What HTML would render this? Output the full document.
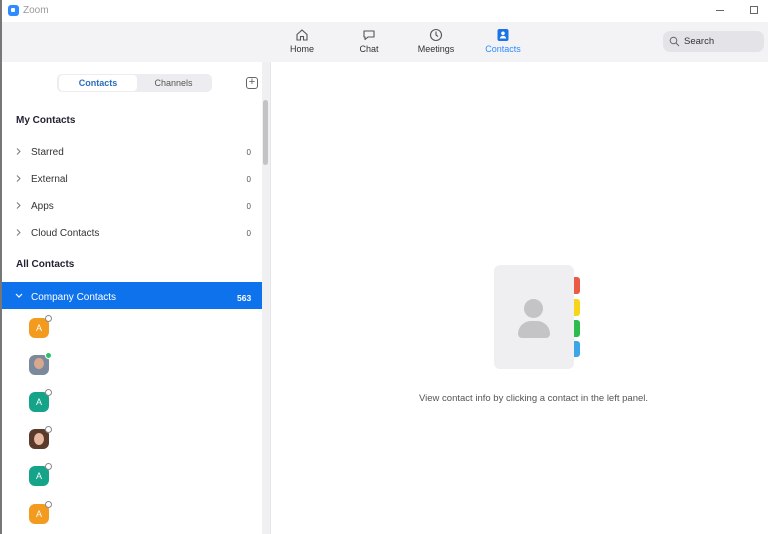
<!DOCTYPE html>
<html><head><style>
*{margin:0;padding:0;box-sizing:border-box}
body{width:768px;height:534px;overflow:hidden;background:#fff;font-family:"Liberation Sans",sans-serif;position:relative;color:#232333}
.a{position:absolute}
.row{position:absolute;left:0;width:262px;height:27px;font-size:10px;color:#333}
.row svg{position:absolute;left:16px;top:9px}
.row .l{position:absolute;left:31px;top:8px}
.row .n{position:absolute;right:11px;top:9px;font-size:8px;color:#555}
.av{position:absolute;left:29px;width:20px;height:20px;border-radius:6px;color:#fff;font-size:9px;text-align:center;line-height:20px}
.dot{position:absolute;left:45px;width:7px;height:7px;border-radius:50%;background:#fff;border:1.5px solid #888}
.nav{position:absolute;top:28px;text-align:center;font-size:9px;color:#333;width:50px}
.nav svg{display:block;margin:0 auto 2px}
</style></head><body>
<div class="a" style="left:0;top:0;width:2px;height:534px;background:#777"></div>
<div class="a" style="left:8px;top:5px;width:11px;height:11px;border-radius:3px;background:#2d8cff"></div>
<div class="a" style="left:11px;top:8px;width:4px;height:4px;background:#fff;border-radius:1px"></div>
<div class="a" style="left:23px;top:5px;color:#999;font-size:10px">Zoom</div>
<div class="a" style="left:716px;top:10px;width:8px;height:1px;background:#666"></div>
<div class="a" style="left:750px;top:6px;width:8px;height:8px;border:1px solid #666"></div>
<div class="a" style="left:2px;top:22px;width:766px;height:40px;background:#f3f3f6"></div>
<div class="nav" style="left:277px"><svg width="14" height="14" viewBox="0 0 14 14"><path d="M2 6.5L7 2l5 4.5V12H8.5V8.5h-3V12H2z" fill="none" stroke="#555" stroke-width="1.1"/></svg>Home</div>
<div class="nav" style="left:344px"><svg width="14" height="14" viewBox="0 0 14 14"><path d="M2 3h10v6H6l-3 2.5V9H2z" fill="none" stroke="#555" stroke-width="1.1" stroke-linejoin="round"/></svg>Chat</div>
<div class="nav" style="left:411px"><svg width="14" height="14" viewBox="0 0 14 14"><circle cx="7" cy="7" r="5.5" fill="none" stroke="#555" stroke-width="1.1"/><path d="M7 3.5V7l2 1.5" fill="none" stroke="#555" stroke-width="1.1"/></svg>Meetings</div>
<div class="nav" style="left:478px;color:#2d8cff"><svg width="14" height="14" viewBox="0 0 14 14"><rect x="1.5" y="1" width="11" height="12" rx="2" fill="#1a73e8"/><circle cx="7" cy="5.3" r="1.8" fill="#fff"/><path d="M3.8 10.5c.5-2 1.7-2.6 3.2-2.6s2.7.6 3.2 2.6z" fill="#fff"/></svg>Contacts</div>
<div class="a" style="left:663px;top:31px;width:101px;height:21px;border-radius:7px;background:#e4e4e8"></div>
<svg class="a" style="left:669px;top:36px" width="11" height="11" viewBox="0 0 11 11"><circle cx="4.5" cy="4.5" r="3.3" fill="none" stroke="#666" stroke-width="1"/><path d="M7 7l3 3" stroke="#666" stroke-width="1"/></svg>
<div class="a" style="left:684px;top:36px;font-size:9.5px;color:#333">Search</div>
<div class="a" style="left:262px;top:62px;width:8px;height:472px;background:#f0f0f3"></div>
<div class="a" style="left:263px;top:100px;width:5px;height:65px;border-radius:3px;background:#c3c3c6"></div>
<div class="a" style="left:270px;top:62px;width:1px;height:472px;background:#e6e6ea"></div>
<div class="a" style="left:57px;top:74px;width:155px;height:18px;border-radius:5px;background:#ededf1"></div>
<div class="a" style="left:59px;top:75px;width:78px;height:16px;border-radius:4px;background:#fff;font-size:9px;font-weight:bold;color:#2a6ebb;text-align:center;line-height:16px">Contacts</div>
<div class="a" style="left:137px;top:75px;width:73px;height:16px;font-size:9px;color:#555;text-align:center;line-height:16px">Channels</div>
<div class="a" style="left:246px;top:77px;width:12px;height:12px;border:1px solid #666;border-radius:3px;font-size:11px;line-height:9px;text-align:center;color:#555">+</div>
<div class="a" style="left:16px;top:115px;font-size:10px;font-weight:bold">My Contacts</div>
<div class="row" style="top:139px"><svg width="5" height="7" viewBox="0 0 5 7"><path d="M1 .5l3 3-3 3" fill="none" stroke="#777" stroke-width="1"/></svg><span class="l">Starred</span><span class="n">0</span></div>
<div class="row" style="top:166px"><svg width="5" height="7" viewBox="0 0 5 7"><path d="M1 .5l3 3-3 3" fill="none" stroke="#777" stroke-width="1"/></svg><span class="l">External</span><span class="n">0</span></div>
<div class="row" style="top:193px"><svg width="5" height="7" viewBox="0 0 5 7"><path d="M1 .5l3 3-3 3" fill="none" stroke="#777" stroke-width="1"/></svg><span class="l">Apps</span><span class="n">0</span></div>
<div class="row" style="top:220px"><svg width="5" height="7" viewBox="0 0 5 7"><path d="M1 .5l3 3-3 3" fill="none" stroke="#777" stroke-width="1"/></svg><span class="l">Cloud Contacts</span><span class="n">0</span></div>
<div class="a" style="left:16px;top:259px;font-size:10px;font-weight:bold">All Contacts</div>
<div class="a" style="left:2px;top:282px;width:260px;height:27px;background:#0e72ed"></div>
<svg class="a" style="left:15px;top:293px" width="8" height="6" viewBox="0 0 8 6"><path d="M1 1l3 3 3-3" fill="none" stroke="#fff" stroke-width="1.2"/></svg>
<div class="a" style="left:31px;top:292px;font-size:10px;color:#fff">Company Contacts</div>
<div class="a" style="left:237px;top:293px;font-size:8.5px;color:#fff;font-weight:bold">563</div>
<div class="av" style="top:318px;background:#f29b1e">A</div><div class="dot" style="top:315px"></div>
<div class="av" style="top:355px;background:#7a8a9c"><div style="margin:3px auto 0;width:10px;height:11px;border-radius:50%;background:#d8a88c"></div></div><div class="dot" style="top:352px;background:#2cc069;border-color:#fff"></div>
<div class="av" style="top:392px;background:#15a38a">A</div><div class="dot" style="top:389px"></div>
<div class="av" style="top:429px;background:#5a3a2a"><div style="margin:4px auto 0;width:10px;height:12px;border-radius:50%;background:#e6b9a0"></div></div><div class="dot" style="top:426px"></div>
<div class="av" style="top:466px;background:#15a38a">A</div><div class="dot" style="top:463px"></div>
<div class="av" style="top:504px;background:#f29b1e">A</div><div class="dot" style="top:501px"></div>
<div class="a" style="left:573px;top:277px;width:7px;height:17px;border-radius:0 3px 3px 0;background:#ea5a44"></div>
<div class="a" style="left:573px;top:299px;width:7px;height:17px;border-radius:0 3px 3px 0;background:#f6d51a"></div>
<div class="a" style="left:573px;top:320px;width:7px;height:17px;border-radius:0 3px 3px 0;background:#2dbb4e"></div>
<div class="a" style="left:573px;top:341px;width:7px;height:16px;border-radius:0 3px 3px 0;background:#3da6e6"></div>
<div class="a" style="left:494px;top:265px;width:80px;height:104px;border-radius:6px;background:#efeff1"></div>
<div class="a" style="left:524px;top:299px;width:19px;height:19px;border-radius:50%;background:#c4c4c7"></div>
<div class="a" style="left:518px;top:321px;width:32px;height:17px;border-radius:16px 16px 5px 5px;background:#c4c4c7"></div>
<div class="a" style="left:419px;top:393px;font-size:9.5px;color:#555">View contact info by clicking a contact in the left panel.</div>
</body></html>
